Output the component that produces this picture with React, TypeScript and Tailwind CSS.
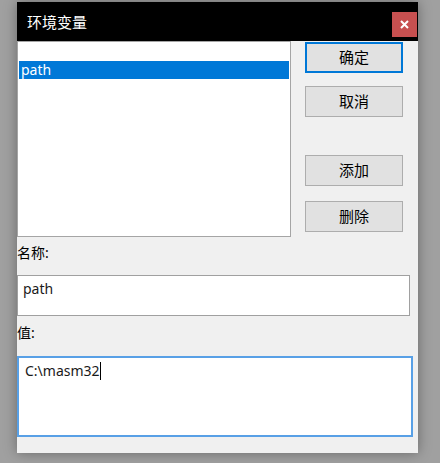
import React from 'react';

const font = '"Noto Sans", "Noto Sans CJK SC", sans-serif';

function DlgButton({ label, primary }: { label: string; primary?: boolean }) {
  return (
    <button
      className={
        primary
          ? 'w-[98px] h-[31px] bg-[#e1e1e1] border-2 border-[#0078d7] text-[15px] text-black leading-none'
          : 'w-[98px] h-[31px] bg-[#e1e1e1] border border-[#adadad] text-[15px] text-black leading-none'
      }
    >
      {label}
    </button>
  );
}

export default function App() {
  return (
    <div className="w-[440px] h-[463px] bg-[#a0a0a0] pl-[17px] pt-[2px]" style={{ fontFamily: font }}>
      <div className="w-[401px] h-[451px] bg-[#f0f0f0] shadow-[0_0_12px_rgba(0,0,0,0.35)] flex flex-col">
        {/* title bar */}
        <div className="h-[39px] bg-black flex items-start justify-between shrink-0">
          <span className="text-white text-[15px] pl-[10px] mt-[9px] leading-[22px]">环境变量</span>
          <div className="w-[25px] h-[25px] bg-[#c75050] mt-[10px] mr-[1px] flex items-center justify-center">
            <svg width="9" height="9" viewBox="0 0 9 9">
              <path d="M1 1 L8 8 M8 1 L1 8" stroke="white" strokeWidth="2" />
            </svg>
          </div>
        </div>

        {/* list + buttons */}
        <div className="flex">
          <div className="w-[274px] h-[196px] bg-white border border-[#a5a5a5] pt-[19px] px-px">
            <div className="h-[18px] bg-[#0078d7] text-white text-[14px] leading-[18px] pl-[2px]">path</div>
          </div>
          <div className="flex flex-col ml-[14px] mt-px">
            <DlgButton label="确定" primary />
            <div className="mt-[13px]">
              <DlgButton label="取消" />
            </div>
            <div className="mt-[38px]">
              <DlgButton label="添加" />
            </div>
            <div className="mt-[15px]">
              <DlgButton label="删除" />
            </div>
          </div>
        </div>

        <div className="text-[14px] text-black leading-[18px] mt-[7px]">名称:</div>
        <div className="w-[393px] h-[41px] mt-[13px] bg-white border border-[#a0a0a0] px-[5px] pt-[4px] text-[14px] text-[#1a1a1a] leading-[18px]">
          path
        </div>

        <div className="text-[14px] text-black leading-[18px] mt-[8px]">值:</div>
        <div className="w-[396px] h-[81px] mt-[14px] bg-white border-2 border-[#58a0e6] px-[6px] pt-[4px] text-[14px] text-[#1a1a1a] leading-[18px]">
          <span>C:\masm32</span>
          <span className="inline-block w-px h-[18px] bg-black align-top"></span>
        </div>
      </div>
    </div>
  );
}
